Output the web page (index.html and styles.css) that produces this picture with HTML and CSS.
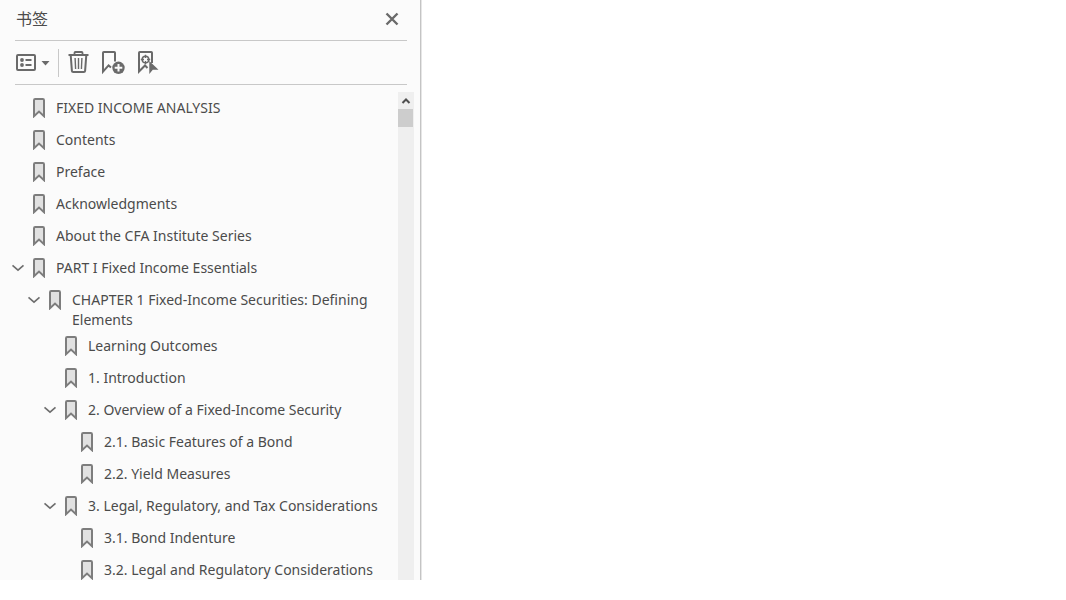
FILE: index.html
```html
<!DOCTYPE html>
<html lang="zh-CN">
<head>
    <meta charset="UTF-8">
    <meta name="viewport" content="width=device-width, initial-scale=1.0">
    <title>书签</title>
    <link rel="stylesheet" href="styles.css">
</head>
<body>
    <svg class="defs" aria-hidden="true">
        <symbol id="bookmark" viewBox="0 0 14 20">
            <path d="M2 18.2V2.2Q2 1 3.2 1H10.8Q12 1 12 2.2V18.2L7 13.6Z" fill="#e1e1e1" stroke="#7d7d7d" stroke-width="2"/>
        </symbol>
        <symbol id="chevron" viewBox="0 0 14 8">
            <path d="M1.5 1.3L7 6.2L12.5 1.3" fill="none" stroke="#6e6e6e" stroke-width="1.6"/>
        </symbol>
    </svg>

    <aside class="panel">
        <header class="panel-header">
            <h1>书签</h1>
            <button class="close-btn" aria-label="关闭">
                <svg width="14" height="14" viewBox="0 0 14 14"><path d="M1.5 1.5L12.5 12.5M12.5 1.5L1.5 12.5" stroke="#6a6a6a" stroke-width="2.4"/></svg>
            </button>
        </header>

        <div class="toolbar">
            <button class="options-btn" aria-label="选项">
                <svg width="34" height="24" viewBox="0 0 34 24">
                    <rect x="1" y="4" width="18" height="15" rx="1" fill="none" stroke="#6a6a6a" stroke-width="2"/>
                    <circle cx="6" cy="9" r="1.9" fill="#6a6a6a"/>
                    <circle cx="6" cy="14" r="1.9" fill="#6a6a6a"/>
                    <path d="M9.5 9H15.5M9.5 14H15.5" stroke="#6a6a6a" stroke-width="1.8"/>
                    <path d="M25.5 10H33.5L29.5 14.5Z" fill="#6a6a6a"/>
                </svg>
            </button>
            <span class="divider"></span>
            <button aria-label="删除">
                <svg width="22" height="24" viewBox="0 0 22 24">
                    <path d="M0.5 4H20.5" stroke="#6a6a6a" stroke-width="2"/>
                    <path d="M6.5 4V1.8Q6.5 1 7.3 1H13.7Q14.5 1 14.5 1.8V4" fill="none" stroke="#6a6a6a" stroke-width="1.8"/>
                    <path d="M2.7 4L3.9 19.8Q4 21 5.2 21H15.8Q17 21 17.1 19.8L18.3 4" fill="none" stroke="#6a6a6a" stroke-width="2"/>
                    <path d="M7.1 7L7.6 18M10.5 7V18M13.9 7L13.4 18" stroke="#6a6a6a" stroke-width="1.4"/>
                </svg>
            </button>
            <button aria-label="新建书签">
                <svg width="23" height="24" viewBox="0 0 23 24">
                    <path d="M9 16.4L6.6 14.4L1 20.6V1.8Q1 1 1.8 1H12.2Q13 1 13 1.8V10.5" fill="none" stroke="#6a6a6a" stroke-width="2"/>
                    <circle cx="16.5" cy="16.8" r="6.2" fill="#6a6a6a"/>
                    <path d="M16.5 13V20.6M12.7 16.8H20.3" stroke="#fbfbfb" stroke-width="2"/>
                </svg>
            </button>
            <button aria-label="查找当前书签">
                <svg width="24" height="24" viewBox="0 0 24 24">
                    <path d="M10.5 17L8 14.5L2 20.5V1.8Q2 1 2.8 1H14.2Q15 1 15 1.8V12" fill="none" stroke="#6a6a6a" stroke-width="2"/>
                    <circle cx="8.5" cy="8.5" r="3.3" fill="none" stroke="#6a6a6a" stroke-width="1.5"/>
                    <path d="M8.5 3.8V7M8.5 10V13.2M3.8 8.5H7M10 8.5H13.2" stroke="#6a6a6a" stroke-width="1.4"/>
                    <path d="M12.3 10V23L15.8 18.8H21.5Z" fill="#6a6a6a"/>
                </svg>
            </button>
        </div>

        <div class="panel-body">
            <ul class="tree">
                <li><div class="row"><svg class="mark"><use href="#bookmark"/></svg><a href="#">FIXED INCOME ANALYSIS</a></div></li>
                <li><div class="row"><svg class="mark"><use href="#bookmark"/></svg><a href="#">Contents</a></div></li>
                <li><div class="row"><svg class="mark"><use href="#bookmark"/></svg><a href="#">Preface</a></div></li>
                <li><div class="row"><svg class="mark"><use href="#bookmark"/></svg><a href="#">Acknowledgments</a></div></li>
                <li><div class="row"><svg class="mark"><use href="#bookmark"/></svg><a href="#">About the CFA Institute Series</a></div></li>
                <li>
                    <div class="row"><button class="toggle" aria-label="折叠"><svg><use href="#chevron"/></svg></button><svg class="mark"><use href="#bookmark"/></svg><a href="#">PART I Fixed Income Essentials</a></div>
                    <ul>
                        <li>
                            <div class="row"><button class="toggle" aria-label="折叠"><svg><use href="#chevron"/></svg></button><svg class="mark"><use href="#bookmark"/></svg><a href="#">CHAPTER 1 Fixed-Income Securities: Defining Elements</a></div>
                            <ul>
                                <li><div class="row"><svg class="mark"><use href="#bookmark"/></svg><a href="#">Learning Outcomes</a></div></li>
                                <li><div class="row"><svg class="mark"><use href="#bookmark"/></svg><a href="#">1. Introduction</a></div></li>
                                <li>
                                    <div class="row"><button class="toggle" aria-label="折叠"><svg><use href="#chevron"/></svg></button><svg class="mark"><use href="#bookmark"/></svg><a href="#">2. Overview of a Fixed-Income Security</a></div>
                                    <ul>
                                        <li><div class="row"><svg class="mark"><use href="#bookmark"/></svg><a href="#">2.1. Basic Features of a Bond</a></div></li>
                                        <li><div class="row"><svg class="mark"><use href="#bookmark"/></svg><a href="#">2.2. Yield Measures</a></div></li>
                                    </ul>
                                </li>
                                <li>
                                    <div class="row"><button class="toggle" aria-label="折叠"><svg><use href="#chevron"/></svg></button><svg class="mark"><use href="#bookmark"/></svg><a href="#">3. Legal, Regulatory, and Tax Considerations</a></div>
                                    <ul>
                                        <li><div class="row"><svg class="mark"><use href="#bookmark"/></svg><a href="#">3.1. Bond Indenture</a></div></li>
                                        <li><div class="row"><svg class="mark"><use href="#bookmark"/></svg><a href="#">3.2. Legal and Regulatory Considerations</a></div></li>
                                    </ul>
                                </li>
                            </ul>
                        </li>
                    </ul>
                </li>
            </ul>
            <div class="scrollbar">
                <button class="scroll-up" aria-label="向上滚动">
                    <svg width="10" height="8" viewBox="0 0 10 8"><path d="M1.5 6L5 2.5L8.5 6" fill="none" stroke="#505050" stroke-width="2"/></svg>
                </button>
                <div class="thumb"></div>
            </div>
        </div>
    </aside>
</body>
</html>
```

FILE: styles.css
```css
* {
    box-sizing: border-box;
}
body {
    margin: 0;
    background: #fff;
    color: #4b4b4b;
    font-family: "Segoe UI", "Noto Sans", "Noto Sans CJK SC", sans-serif;
    font-size: 14px;
}
.defs {
    display: none;
}
button {
    display: flex;
    padding: 0;
    border: none;
    background: none;
    cursor: pointer;
}
.panel {
    display: flex;
    flex-direction: column;
    width: 421px;
    max-width: 100%;
    height: calc(100vh - 20px);
    background: #fbfbfb;
    border-right: 1px solid #c4c4c4;
    box-shadow: 1px 0 #e6e6e6;
}
.panel-header {
    display: flex;
    align-items: center;
    justify-content: space-between;
    height: 41px;
    margin: 0 13px 0 15px;
    padding: 0 8px 2px 1px;
    border-bottom: 1px solid #c8c8c8;
}
.panel-header h1 {
    margin: 0;
    font-size: 16px;
    font-weight: 400;
    line-height: 22px;
}
.toolbar {
    display: flex;
    align-items: center;
    height: 44px;
    margin: 0 13px 7px 15px;
    padding-left: 1px;
    border-bottom: 1px solid #c8c8c8;
    gap: 12px;
}
.options-btn {
    margin-right: -4px;
}
.divider {
    width: 1px;
    height: 28px;
    margin-right: -3px;
    background: #c8c8c8;
}
.panel-body {
    display: flex;
    flex: 1;
    min-height: 0;
    padding-right: 6px;
}
.tree {
    flex: 1;
    overflow: hidden;
}
ul {
    margin: 0;
    padding: 0;
    list-style: none;
}
ul ul {
    padding-left: 16px;
}
.row {
    display: grid;
    grid-template-columns: 14px 14px 1fr;
    column-gap: 7px;
    align-items: start;
    min-height: 32px;
    padding: 6px 4px 0 11px;
    line-height: 20px;
}
.row a {
    grid-column: 3;
    padding-left: 3px;
    color: inherit;
    text-decoration: none;
}
.row a:hover {
    text-decoration: underline;
}
.mark {
    grid-column: 2;
    width: 14px;
    height: 20px;
}
.toggle {
    height: 20px;
    align-items: center;
}
.toggle svg {
    width: 14px;
    height: 8px;
}
.scrollbar {
    width: 16px;
    background: #efefef;
}
.scroll-up {
    width: 15px;
    height: 17px;
    align-items: center;
    justify-content: center;
}
.thumb {
    width: 15px;
    height: 18px;
    background: #cdcdcd;
}
```
